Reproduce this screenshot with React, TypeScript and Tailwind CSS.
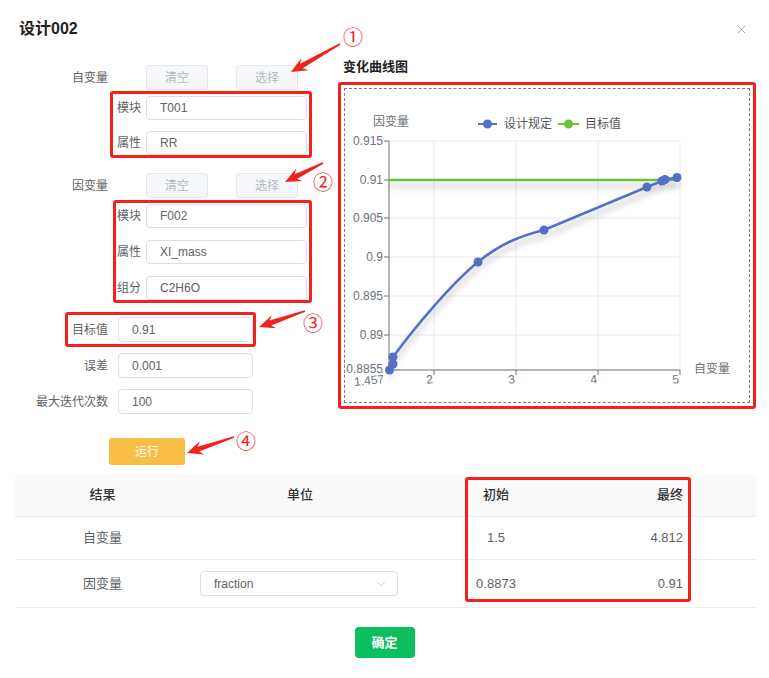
import React from 'react';
import { X, ChevronDown } from 'lucide-react';

type Pt = [number, number];

// red arrow pointing from tail to tip, used for the annotations
const arrowPoints = (tail: Pt, tip: Pt) => {
  const dx = tip[0] - tail[0];
  const dy = tip[1] - tail[1];
  const len = Math.hypot(dx, dy);
  const ux = dx / len;
  const uy = dy / len;
  const nx = -uy;
  const ny = ux;
  const at = (base: Pt, back: number, side: number) =>
    `${base[0] - ux * back + nx * side},${base[1] - uy * back + ny * side}`;
  return [
    at(tail, 0, 0.8),
    at(tip, 12, 2.6),
    at(tip, 16, 7),
    at(tip, 0, 0),
    at(tip, 16, -7),
    at(tip, 12, -2.6),
    at(tail, 0, -0.8),
  ].join(' ');
};

const arrows: [Pt, Pt][] = [
  [[340, 44], [291, 72]],
  [[323, 163], [285, 182]],
  [[305, 311], [259, 327]],
  [[234, 437], [187, 453]],
];

const marks = [
  { n: '①', x: 353, y: 37 },
  { n: '②', x: 323, y: 182 },
  { n: '③', x: 313, y: 323 },
  { n: '④', x: 246, y: 441 },
];

const Input = ({ value, w }: { value: string; w: string }) => (
  <div
    className={`${w} h-full border border-[#dcdfe6] rounded-[4px] bg-white flex items-center pl-[13px] text-[12px] text-[#606266]`}
  >
    {value}
  </div>
);

const GhostButton = ({ label }: { label: string }) => (
  <div className="w-[62px] h-[25px] rounded-[3px] border border-[#e4e7ed] bg-[#f5f7fa] flex items-center justify-center text-[12px] text-[#b4b8bf]">
    {label}
  </div>
);

const Chart = () => {
  const yTicks: [string, number][] = [
    ['0.915', 140],
    ['0.91', 179],
    ['0.905', 217],
    ['0.9', 256],
    ['0.895', 295],
    ['0.89', 334],
  ];
  const xTicks: [string, number][] = [
    ['2', 434],
    ['3', 516],
    ['4', 598],
    ['5', 680],
  ];
  const pts: Pt[] = [
    [389.5, 369],
    [393, 363],
    [393, 356],
    [478, 261],
    [544, 229],
    [647, 186],
    [662, 180],
    [665, 178.5],
    [677, 176.5],
  ];
  const blue = '#5470c6';
  const green = '#67c23a';
  return (
    <svg width={404} height={314} viewBox="345 88 404 314" className="block">
      <defs>
        <filter id="lineShadow" filterUnits="userSpaceOnUse" x={345} y={88} width={404} height={314}>
          <feDropShadow dx="0" dy="6" stdDeviation="3" floodColor="#000" floodOpacity="0.25" />
        </filter>
      </defs>

      {yTicks.map(([, y]) => (
        <line key={y} x1={389} x2={680} y1={y} y2={y} stroke="#e6ebf3" />
      ))}
      {xTicks.map(([, x]) => (
        <line key={x} x1={x} x2={x} y1={140} y2={369} stroke="#e6ebf3" />
      ))}

      <line x1={389} x2={389} y1={140} y2={369} stroke="#6e7079" />
      <line x1={389} x2={680} y1={369} y2={369} stroke="#9a9ca3" strokeWidth={1.5} />
      {yTicks.map(([, y]) => (
        <line key={y} x1={384} x2={389} y1={y} y2={y} stroke="#6e7079" />
      ))}
      {xTicks.map(([, x]) => (
        <line key={x} x1={x} x2={x} y1={369} y2={374} stroke="#6e7079" />
      ))}

      <g fontSize={12} fill="#6e7079">
        {yTicks.map(([t, y]) => (
          <text key={t} x={383} y={y + 4} textAnchor="end">
            {t}
          </text>
        ))}
        <text x={383} y={372} textAnchor="end">0.8855</text>
        <text x={384} y={382} textAnchor="end" transform="rotate(-6 384 378)">1.457</text>
        {xTicks.map(([t, x]) => (
          <text key={t} x={x - 1} y={382} textAnchor="end" transform={`rotate(-6 ${x} 378)`}>
            {t}
          </text>
        ))}
        <text x={694} y={372}>自变量</text>
        <text x={373} y={125}>因变量</text>
      </g>

      {/* legend */}
      <line x1={478} x2={497} y1={123} y2={123} stroke={blue} strokeWidth={2} />
      <circle cx={487.5} cy={123} r={4.5} fill={blue} />
      <text x={504} y={127} fontSize={12} fill="#555">设计规定</text>
      <line x1={558} x2={579} y1={123} y2={123} stroke={green} strokeWidth={2} />
      <circle cx={568.5} cy={123} r={4.5} fill={green} />
      <text x={585} y={127} fontSize={12} fill="#555">目标值</text>

      <line x1={389} x2={680} y1={179} y2={179} stroke={green} strokeWidth={2.5} filter="url(#lineShadow)" />

      <path
        d="M389.5,369 L393,363 L393,356 C415,326 452,282 478,261 C500,243 520,235 544,229 L647,186 L662,180 L665,178.5 L677,176.5"
        fill="none"
        stroke={blue}
        strokeWidth={2.5}
        strokeLinejoin="round"
        filter="url(#lineShadow)"
      />
      {pts.map(([x, y], i) => (
        <circle key={i} cx={x} cy={y} r={4.5} fill={blue} />
      ))}
    </svg>
  );
};

const App: React.FC = () => {
  return (
    <div className="relative w-[769px] h-[678px] bg-white overflow-hidden font-['Liberation_Sans','Noto_Sans_CJK_SC',sans-serif]">
      {/* header */}
      <div className="flex items-center justify-between pt-[18px] pl-[19px] pr-[21px]">
        <span className="text-[16px] leading-[22px] font-bold text-[#1f1f1f]">设计002</span>
        <X size={13} strokeWidth={1.5} className="text-[#909399]" />
      </div>

      {/* body */}
      <div className="flex mt-[15px]">
        <div className="w-[330px] pt-[10px] text-[12px] text-[#606266]">
          <div className="flex items-center h-[25px]">
            <span className="w-[108px] text-right">自变量</span>
            <div className="ml-[38px] flex gap-[28px]">
              <GhostButton label="清空" />
              <GhostButton label="选择" />
            </div>
          </div>

          <div className="mt-[1px] ml-[110px] w-[202px] border-[3px] border-[#f2211c] rounded-[3px] pt-[2px] flex flex-col gap-[11px]">
            {[
              ['模块', 'T001'],
              ['属性', 'RR'],
            ].map(([l, v]) => (
              <div key={l} className="flex items-center h-[24px]">
                <span className="w-[33px] pl-[4px]">{l}</span>
                <Input value={v} w="w-[161px]" />
              </div>
            ))}
          </div>

          <div className="mt-[15px] flex items-center h-[25px]">
            <span className="w-[108px] text-right">因变量</span>
            <div className="ml-[38px] flex gap-[28px]">
              <GhostButton label="清空" />
              <GhostButton label="选择" />
            </div>
          </div>

          <div className="mt-[2px] ml-[113px] w-[199px] border-[3px] border-[#f2211c] rounded-[3px] pt-[1px] flex flex-col gap-[12px]">
            {[
              ['模块', 'F002'],
              ['属性', 'XI_mass'],
              ['组分', 'C2H6O'],
            ].map(([l, v]) => (
              <div key={l} className="flex items-center h-[24px]">
                <span className="w-[30px] pl-[1px]">{l}</span>
                <Input value={v} w="w-[161px]" />
              </div>
            ))}
          </div>

          <div className="mt-[9px] ml-[65px] w-[191px] border-[3px] border-[#f2211c] rounded-[3px] py-[2px]">
            <div className="flex items-center h-[25px]">
              <span className="w-[40px] text-right">目标值</span>
              <div className="ml-[10px] h-full">
                <Input value="0.91" w="w-[135px]" />
              </div>
            </div>
          </div>

          <div className="mt-[6px] flex items-center h-[25px]">
            <span className="w-[108px] text-right">误差</span>
            <div className="ml-[10px] h-full">
              <Input value="0.001" w="w-[135px]" />
            </div>
          </div>

          <div className="mt-[11px] flex items-center h-[25px]">
            <span className="w-[108px] text-right">最大迭代次数</span>
            <div className="ml-[10px] h-full">
              <Input value="100" w="w-[135px]" />
            </div>
          </div>

          <div className="mt-[24px] ml-[109px] w-[76px] h-[27px] rounded-[3px] bg-[#f9be46] flex items-center justify-center text-[12px] text-white">
            运行
          </div>
        </div>

        <div className="ml-[8px]">
          <div className="pl-[5px] text-[13px] leading-[24px] font-bold text-[#1f1f1f]">变化曲线图</div>
          <div className="mt-[3px] w-[418px] h-[327px] border-[3px] border-[#f2211c] rounded-[3px] p-[3px]">
            <div className="w-full h-full border border-dashed border-[#7a7a7a]">
              <Chart />
            </div>
          </div>
        </div>
      </div>

      {/* result table */}
      <div className="mt-[9px] mx-[15px] w-[741px] text-[13px]">
        <div className="grid grid-cols-[175px_220px_172px_110px_1fr] h-[43px] items-center bg-[#fafafa] border-b border-[#ebeef5] font-medium text-[#303133]">
          <span className="text-center">结果</span>
          <span className="text-center">单位</span>
          <span className="text-center">初始</span>
          <span className="text-right pr-[9px]">最终</span>
          <span />
        </div>
        <div className="grid grid-cols-[175px_220px_172px_110px_1fr] h-[43px] items-center border-b border-[#ebeef5] text-[#606266]">
          <span className="text-center">自变量</span>
          <span />
          <span className="text-center">1.5</span>
          <span className="text-right pr-[9px]">4.812</span>
          <span />
        </div>
        <div className="grid grid-cols-[175px_220px_172px_110px_1fr] h-[48px] items-center border-b border-[#ebeef5] text-[#606266]">
          <span className="text-center">因变量</span>
          <div className="pl-[10px]">
            <div className="w-[198px] h-[25px] rounded-[4px] border border-[#dcdfe6] flex items-center justify-between pl-[13px] pr-[9px] text-[12px]">
              <span>fraction</span>
              <ChevronDown size={14} strokeWidth={1.5} className="text-[#c0c4cc]" />
            </div>
          </div>
          <span className="text-center">0.8873</span>
          <span className="text-right pr-[9px]">0.91</span>
          <span />
        </div>
      </div>

      <div className="flex justify-center mt-[19px]">
        <div className="w-[60px] h-[31px] rounded-[4px] bg-[#0bbf5f] flex items-center justify-center text-[13px] font-bold text-white">
          确定
        </div>
      </div>

      {/* annotation overlay */}
      <div className="absolute left-[465px] top-[477px] w-[226px] h-[125px] border-[3px] border-[#f2211c] rounded-[3px] pointer-events-none" />
      <svg className="absolute left-0 top-0 pointer-events-none" width={769} height={678}>
        {arrows.map(([t, h], i) => (
          <polygon key={i} points={arrowPoints(t, h)} fill="#f2211c" />
        ))}
      </svg>
      {marks.map((m) => (
        <span
          key={m.n}
          className="absolute w-[24px] h-[24px] leading-[24px] text-center text-[20px] text-[#f2211c] font-['Noto_Sans_CJK_SC',sans-serif]"
          style={{ left: m.x - 12, top: m.y - 12 }}
        >
          {m.n}
        </span>
      ))}
    </div>
  );
};

export default App;
